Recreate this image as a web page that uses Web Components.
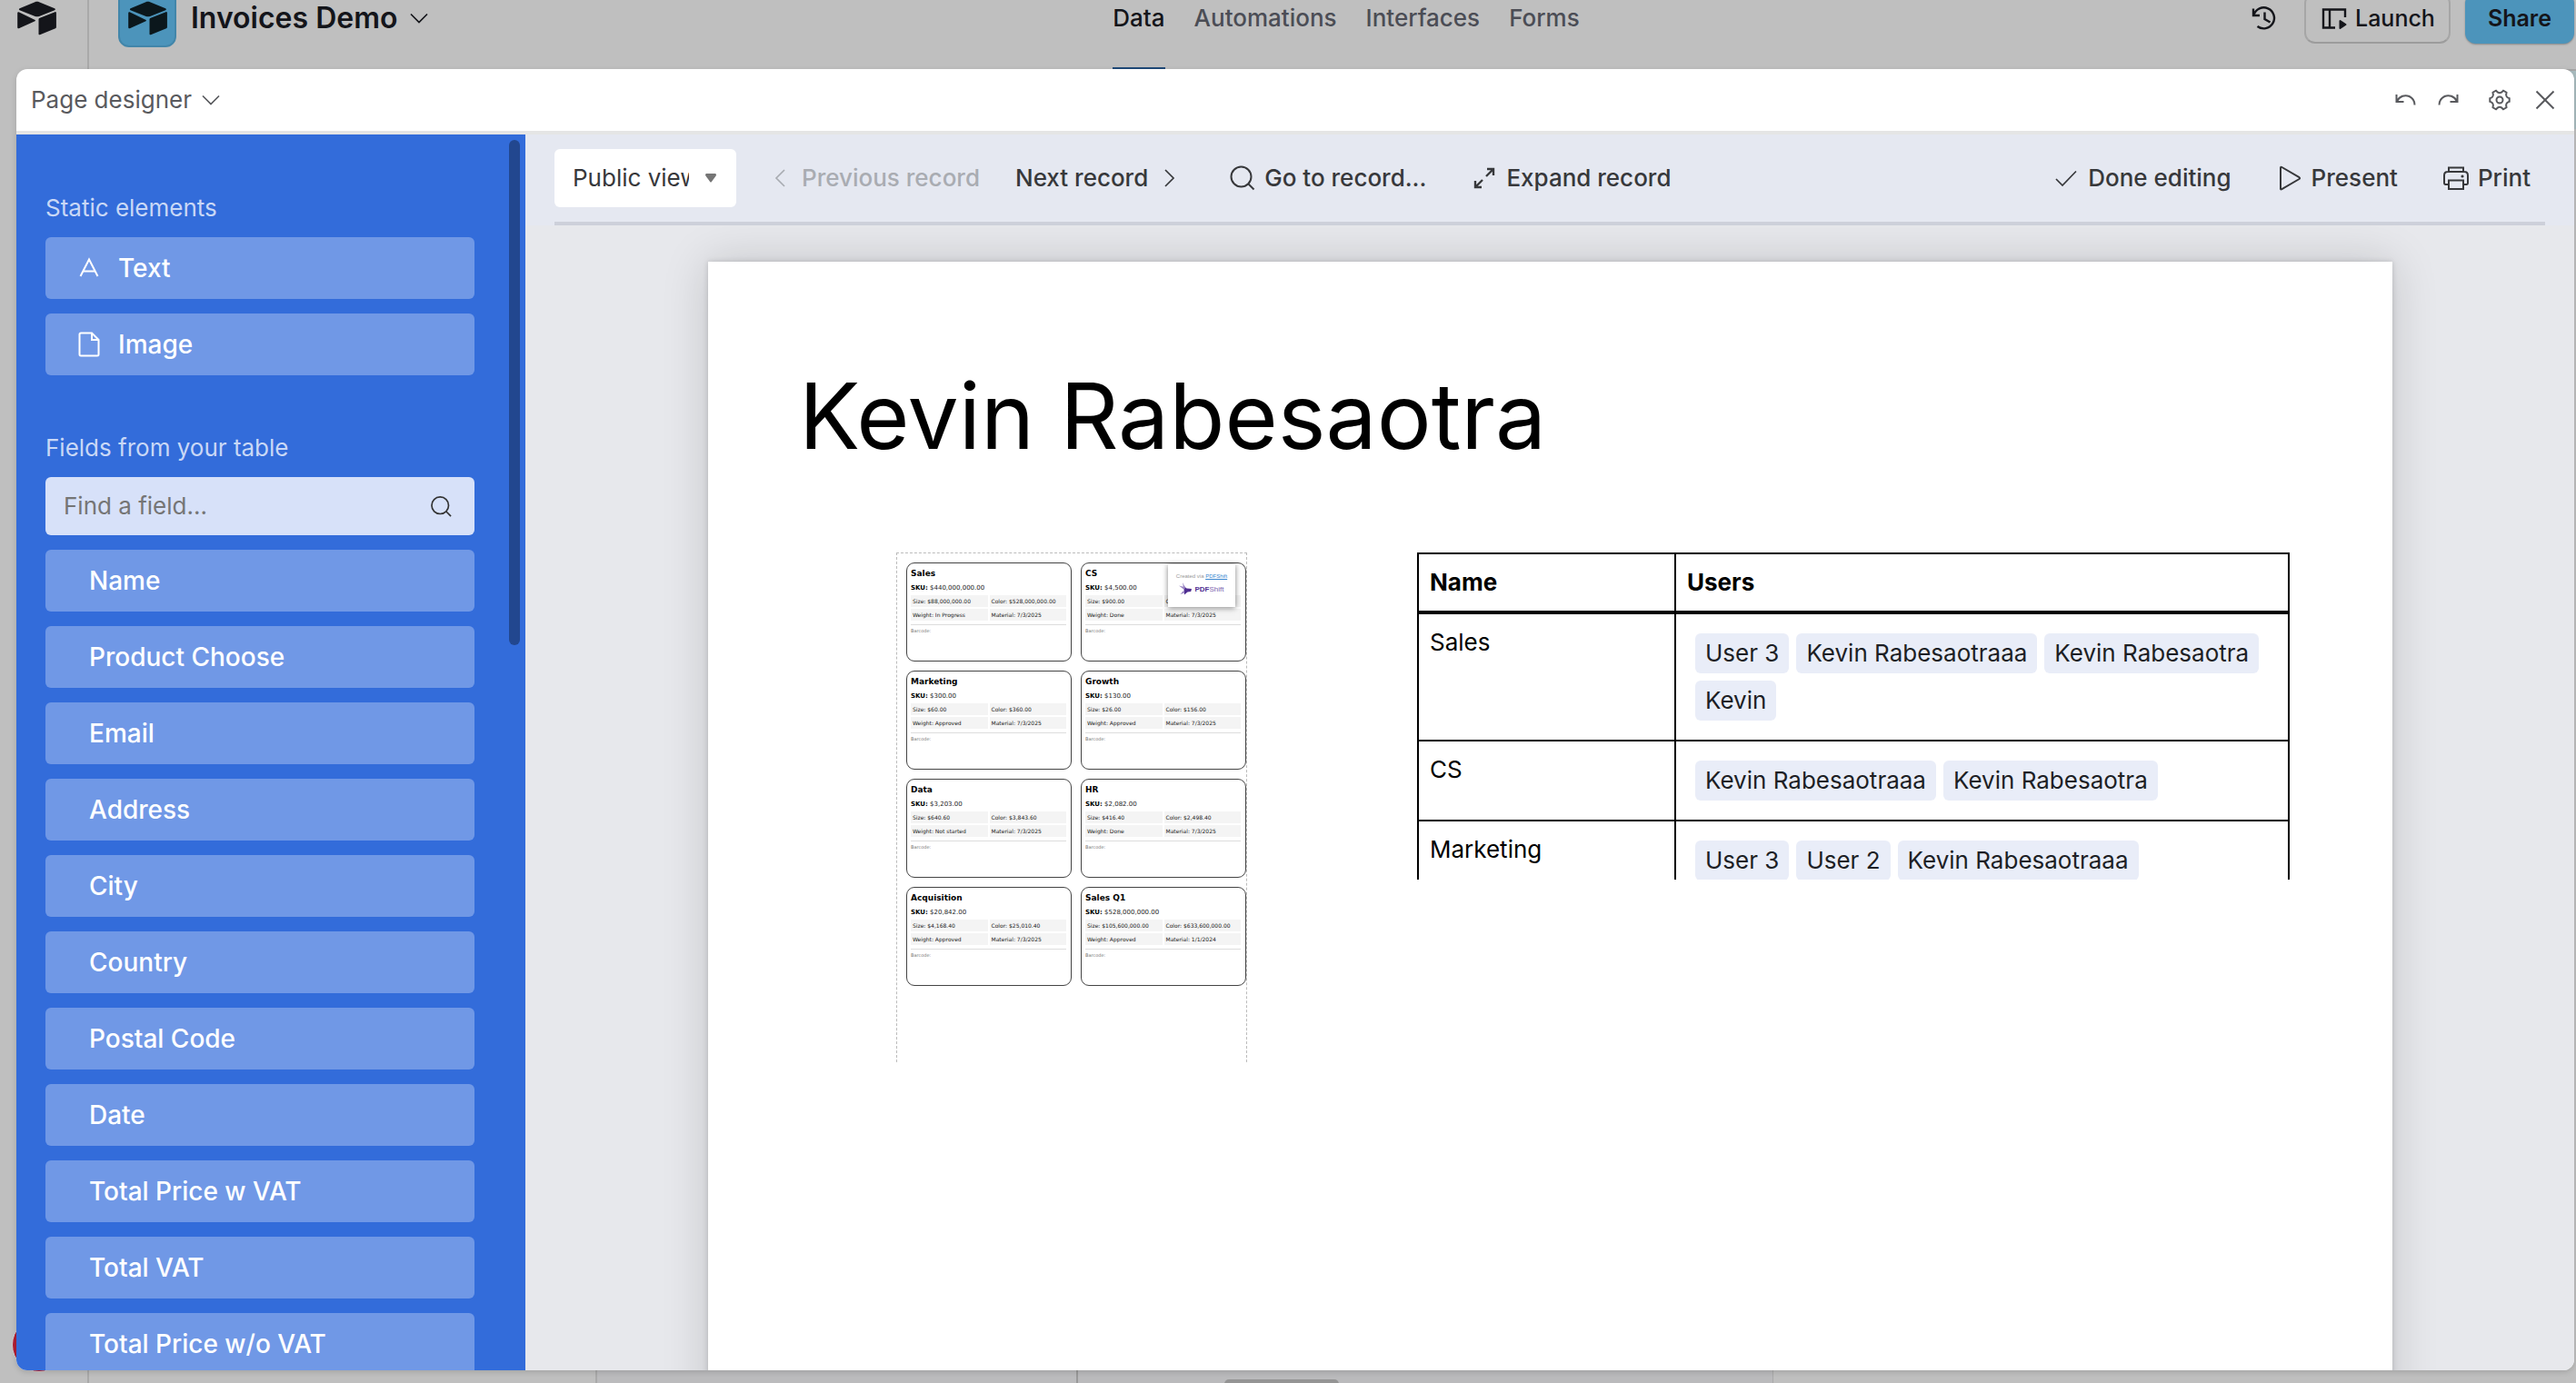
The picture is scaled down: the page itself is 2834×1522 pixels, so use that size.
<!DOCTYPE html>
<html lang="en">
<head>
  <meta charset="UTF-8">
  <meta name="viewport" content="width=device-width, initial-scale=1.0">
  <title>Invoices Demo - Page designer</title>
  <style>
    body {
      margin: 0;
      height: 100vh;
      overflow: hidden;
      font-family: Inter, "Liberation Sans", sans-serif;
      font-size: 26px;
      line-height: 32px;
      background: #bfbfbf;
    }
  </style>
</head>
<body>
  <base-workspace></base-workspace>

  <designer-dialog heading="Page designer">
    <element-sidebar slot="sidebar"></element-sidebar>
    <record-toolbar slot="toolbar"></record-toolbar>
    <design-page slot="canvas" heading="Kevin Rabesaotra">
      <card-sheet slot="left"></card-sheet>
      <users-table slot="right"></users-table>
    </design-page>
  </designer-dialog>

  <script>
    // line icons, all on a 32 x 32 grid
    const ICONS = {
      chevronDown: '<path stroke-width="1.700" d="M7 11.500l9 9 9-9"/>',
      chevronLeft: '<path stroke-width="1.700" d="M21 7l-9 9 9 9"/>',
      chevronRight: '<path stroke-width="1.700" d="M11 7l9 9-9 9"/>',
      search: '<circle cx="14.500" cy="14.500" r="11"/><path d="M22.500 22.500l6 6"/>',
      expand: '<path stroke-width="2.400" d="M18 14l8-8M19 6h7v7M14 18l-8 8M6 19v7h7"/>',
      check: '<path stroke-width="1.700" d="M5 17l7 7L27 8.500"/>',
      play: '<path d="M6 5v22.500q0 1.500 1.400.7L26.500 17q1.300-.9 0-1.800L7.400 4q-1.400-.8-1.400 1z"/>',
      print: '<path d="M8 9V4.500h16V9M8 23H4.500Q3 23 3 21V13q0-4 4-4h18q4 0 4 4v8q0 2-1.500 2H24"/><path d="M8 18.500h16V28H8z"/><circle cx="23" cy="14" r="1.600" fill="currentColor" stroke="none"/>',
      undo: '<path d="M6.500 10v8h8M7 17.500C10 11.500 16 10 20.500 12c4 2 6 5.500 6 9.500"/>',
      redo: '<path d="M25.500 10v8h-8M25 17.500C22 11.500 16 10 11.500 12c-4 2-6 5.500-6 9.500"/>',
      gear: '<circle cx="16" cy="16" r="3.500"/><path d="M12 5.700l2 1.900q2 1.100 4 0l2-1.900 3.500 2-.4 2.800q.2 2.200 2.200 3.100l1.400.5v3.800l-1.400.5q-2 .9-2.200 3.100l.4 2.800-3.500 2-2-1.900q-2-1.100-4 0l-2 1.900-3.500-2 .4-2.800q-.2-2.200-2.200-3.100l-1.400-.5v-3.800l1.400-.5q2-.9 2.200-3.100l-.4-2.800z"/>',
      close: '<path d="M6.500 6.500l19 19M25.500 6.500l-19 19"/>',
      textA: '<path d="M6.500 25L16 6.500 25.500 25M9.500 19.500h13"/>',
      file: '<path d="M19 3.500H7q-1.500 0-1.500 1.500v22q0 1.500 1.500 1.500h18q1.500 0 1.500-1.500V11zM19 3.500V11h7.500"/>',
      history: '<path stroke-width="2.400" d="M4 5.500v7.500h7M4.500 12.500a11.500 11.500 0 1 1 4 12.500M16.500 9.500v7.500l6 3.500"/>',
      launch: '<path stroke-width="2.400" d="M17 26.500H4v-20h24V15M11 6.500v20"/><path fill="currentColor" stroke-linejoin="round" d="M22.500 19v8l6-4z"/>'
    };

    const LOGO = `<svg width="44" height="38" viewBox="0 0 44 38" fill="currentColor" aria-hidden="true">
      <path d="M20.500 1.200L3.600 8.200c-1 .4-1 1.600 0 2l17 6.700c1.500.6 3 .6 4.500 0l17-6.700c1-.4 1-1.600 0-2L25 1.200c-1.500-.6-3-.6-4.500 0z"/>
      <path d="M24.500 20.300v16c0 .8.700 1.200 1.400.9L43 30.300c.5-.2.900-.6.900-1.200V13.200c0-.8-.8-1.300-1.500-1L25.200 19c-.4.200-.7.700-.7 1.300z"/>
      <path d="M20.600 21.100L2.600 12.300c-.7-.3-1.400.1-1.400.9v15.900c0 1 .9 1.500 1.600 1.100l17.700-8c.6-.3.600-.8.100-1.100z"/>
    </svg>`;

    class BaseElement extends HTMLElement {
      connectedCallback() {
        if (this.shadowRoot) return;
        this.attachShadow({ mode: 'open' });
        this.shadowRoot.innerHTML = `<style>
          *, *::before { box-sizing: border-box; }
          button, input, select { font: inherit; color: inherit; border: 0; background: none; margin: 0; padding: 0; }
          ${this.css()}
        </style>${this.html()}`;
      }
    }

    class UiIcon extends BaseElement {
      css() {
        return `
          :host { display: block; flex: none; width: var(--icon-size, 32px); height: var(--icon-size, 32px); }
          svg { display: block; width: 100%; height: 100%; }`;
      }
      html() {
        return `<svg viewBox="0 0 32 32" fill="none" stroke="currentColor" stroke-width="2" aria-hidden="true">${ICONS[this.getAttribute('name')]}</svg>`;
      }
    }

    // the base behind the dialog, already dimmed
    class BaseWorkspace extends BaseElement {
      css() {
        return `
          :host { display: flex; height: 100%; color: #14151a; }
          .rail { flex: none; width: 98px; padding: 1px 0 0 18px; border-right: 2px solid #a9a9a9; display: flex; flex-direction: column; justify-content: space-between; }
          .avatar { width: 60px; height: 60px; margin: 0 0 12px -5px; border-radius: 50%; background: #b01e33; border: 1px solid #d0cfd0; }
          .main { flex: 1; min-width: 0; display: flex; flex-direction: column; }
          header { flex: none; display: grid; grid-template-columns: 1fr auto 1fr; align-items: center; height: 112px; margin-top: -36px; padding: 0 2px 0 32px; }
          .base, nav, .actions, .actions button { display: flex; align-items: center; }
          .tile { width: 64px; height: 64px; border-radius: 12px; border: 2px solid #4286aa; background: #4c94bb; color: #0b171c; display: grid; place-items: center; }
          h1 { margin: 0 8px 0 16px; font-size: 32px; line-height: 40px; font-weight: 600; }
          nav { gap: 32px; height: 100%; font-weight: 500; }
          nav a { display: flex; align-items: center; height: 100%; color: #4b4d55; text-decoration: none; border-bottom: 2px solid transparent; border-top: 2px solid transparent; }
          nav a[aria-current] { color: #14151a; border-bottom-color: #1f4a78; }
          .actions { justify-content: flex-end; gap: 16px; font-size: 25px; }
          .history { margin-right: 12px; }
          .launch, .share { height: 56px; border-radius: 12px; }
          .launch { gap: 7px; padding: 0 15px; font-weight: 500; border: 2px solid #a6a6a6; border-bottom-color: #9c9c9c; }
          .share { padding: 0 25px; font-weight: 600; background: #4c94bb; box-shadow: 0 1px 2px rgba(0, 0, 0, .3); }
          .tabs { flex: none; height: 66px; border-top: 2px solid #a5a5a5; background: #a9bcbf; }
          .grid { flex: 1; display: flex; position: relative; }
          .views { width: 559px; border-right: 2px solid #a9a9a9; }
          .names { width: 529px; background: #bbbbbd; border-right: 2px solid #999; }
          .cells { width: 765px; background: #bababc; border-right: 1px solid #a9a9a9; }
          .bar { position: absolute; left: 1249px; bottom: -6px; width: 126px; height: 10px; border-radius: 5px; background: #949494; }`;
      }
      html() {
        return `
          <div class="rail">${LOGO}<div class="avatar"></div></div>
          <div class="main">
            <header>
              <div class="base"><div class="tile">${LOGO}</div><h1>Invoices Demo</h1><ui-icon name="chevronDown"></ui-icon></div>
              <nav>
                <a href="#data" aria-current="page">Data</a><a href="#automations">Automations</a><a href="#interfaces">Interfaces</a><a href="#forms">Forms</a>
              </nav>
              <div class="actions">
                <button class="history" aria-label="History"><ui-icon name="history"></ui-icon></button>
                <button class="launch"><ui-icon name="launch"></ui-icon>Launch</button>
                <button class="share">Share</button>
              </div>
            </header>
            <div class="tabs"></div>
            <div class="grid"><div class="views"></div><div class="names"></div><div class="cells"></div><div class="bar"></div></div>
          </div>`;
      }
    }

    class DesignerDialog extends BaseElement {
      css() {
        return `
          :host { position: absolute; inset: 76px 2px 14px 18px; display: flex; flex-direction: column; overflow: hidden; border-radius: 12px; background: #fff; box-shadow: 0 2px 6px rgba(0, 0, 0, .15); }
          header { flex: none; display: flex; align-items: center; height: 72px; padding: 0 16px; color: #595a5e; border-bottom: 4px solid #e5e5e5; }
          h2 { margin: 0 5px 0 0; font-size: 26px; font-weight: 400; }
          .tools { margin-left: auto; display: flex; gap: 16px; }
          .tools button { display: block; }
          .settings { margin: 0 2px 0 8px; }
          .content { flex: 1; min-height: 0; display: flex; }
          .stage { flex: 1; min-width: 0; display: flex; flex-direction: column; background: #e7e8ec; }
          .scroll { flex: 1; min-height: 0; overflow: hidden; padding: 40px 200px 0 201px; }`;
      }
      html() {
        return `
          <header>
            <h2>${this.getAttribute('heading')}</h2><ui-icon name="chevronDown"></ui-icon>
            <div class="tools">
              <button aria-label="Undo"><ui-icon name="undo"></ui-icon></button>
              <button aria-label="Redo"><ui-icon name="redo"></ui-icon></button>
              <button class="settings" aria-label="Settings"><ui-icon name="gear"></ui-icon></button>
              <button aria-label="Close"><ui-icon name="close"></ui-icon></button>
            </div>
          </header>
          <div class="content">
            <slot name="sidebar"></slot>
            <div class="stage">
              <slot name="toolbar"></slot>
              <div class="scroll"><slot name="canvas"></slot></div>
            </div>
          </div>`;
      }
    }

    class ElementSidebar extends BaseElement {
      css() {
        return `
          :host { position: relative; flex: none; box-sizing: border-box; width: 560px; padding: 65px 56px 0 32px; overflow: hidden; color: #fff; background: #336cda; }
          h3 { margin: 0 0 16px; font-size: 26px; font-weight: 400; color: #c9d8f6; }
          .list { display: flex; flex-direction: column; gap: 16px; }
          .static { margin-bottom: 64px; }
          .item { display: flex; align-items: center; gap: 16px; height: 68px; padding: 0 48px; border-radius: 6px; font-size: 28px; font-weight: 500; text-align: left; background: #7098e6; }
          .static .item { padding-left: 32px; }
          .search { display: flex; align-items: center; height: 64px; padding: 0 23px 0 20px; border-radius: 6px; color: #333; background: #d7e1f9; --icon-size: 27px; }
          .search input { flex: 1; min-width: 0; outline: 0; }
          .search input::placeholder { color: #757575; opacity: 1; }
          .thumb { position: absolute; top: 6px; right: 6px; width: 12px; height: 556px; border-radius: 6px; background: #22478f; }`;
      }
      html() {
        const fields = ['Name', 'Product Choose', 'Email', 'Address', 'City', 'Country', 'Postal Code', 'Date',
          'Total Price w VAT', 'Total VAT', 'Total Price w/o VAT'];
        return `
          <h3>Static elements</h3>
          <div class="list static">
            <button class="item"><ui-icon name="textA"></ui-icon>Text</button>
            <button class="item"><ui-icon name="file"></ui-icon>Image</button>
          </div>
          <h3>Fields from your table</h3>
          <div class="list">
            <label class="search"><input type="text" placeholder="Find a field..." aria-label="Find a field"><ui-icon name="search"></ui-icon></label>
            ${fields.map(f => `<button class="item">${f}</button>`).join('')}
          </div>
          <div class="thumb"></div>`;
      }
    }

    class RecordToolbar extends BaseElement {
      css() {
        return `
          :host { display: block; flex: none; padding: 0 32px; color: #37383b; font-weight: 500; background: #e5e8f1; }
          .row { display: flex; align-items: center; gap: 48px; height: 100px; padding-right: 16px; border-bottom: 4px solid #cdd0da; }
          .row > button { display: flex; align-items: center; gap: 8px; white-space: nowrap; }
          .view { position: relative; width: 200px; margin-right: -16px; font-weight: 400; }
          .view select { width: 100%; height: 64px; padding: 0 52px 0 20px; border-radius: 6px; appearance: none; background: #fff; }
          .view svg { position: absolute; right: 22px; top: 27px; pointer-events: none; }
          button:disabled { color: #a9acb2; }
          .next { margin-left: -9px; }
          .done { margin-left: auto; }`;
      }
      html() {
        return `
          <div class="row">
            <div class="view">
              <select aria-label="View"><option>Public view</option></select>
              <svg width="12" height="10" viewBox="0 0 12 10" fill="#757575" aria-hidden="true"><path d="M1 0h10q1 0 1 2L6.500 9.500h-1L0 2q0-2 1-2z"/></svg>
            </div>
            <button disabled><ui-icon name="chevronLeft"></ui-icon>Previous record</button>
            <button class="next">Next record<ui-icon name="chevronRight"></ui-icon></button>
            <button><ui-icon name="search"></ui-icon>Go to record...</button>
            <button><ui-icon name="expand"></ui-icon>Expand record</button>
            <button class="done"><ui-icon name="check"></ui-icon>Done editing</button>
            <button><ui-icon name="play"></ui-icon>Present</button>
            <button><ui-icon name="print"></ui-icon>Print</button>
          </div>`;
      }
    }

    class DesignPage extends BaseElement {
      css() {
        return `
          :host { display: block; box-sizing: border-box; aspect-ratio: 11 / 8.5; padding: 110px 113px 0 100px; color: #000; background: #fff; box-shadow: 0 0 48px rgba(0, 0, 0, .16), 0 0 6px rgba(0, 0, 0, .16); }
          h2 { margin: 0 0 90px; font-size: 100px; line-height: 120px; font-weight: 400; }
          .row { display: grid; grid-template-columns: 386px 1fr; gap: 187px; align-items: start; padding-left: 107px; }`;
      }
      html() {
        return `<h2>${this.getAttribute('heading')}</h2><div class="row"><slot name="left"></slot><slot name="right"></slot></div>`;
      }
    }

    class CardSheet extends BaseElement {
      css() {
        return `
          :host { position: relative; display: grid; box-sizing: border-box; grid-template-columns: 1fr 1fr; align-content: start; gap: 10px; min-height: 561px; padding: 10px 0 0 10px; border: 1px dashed #bbb; border-bottom: 0; font-family: "DejaVu Sans", sans-serif; color: #222; }
          .card { height: 109px; padding: 5px 5px 0 4px; border: 1px solid #444; border-radius: 9px; background: #fff; }
          h4 { margin: 0; font-size: 9px; line-height: 13px; color: #000; }
          p { margin: 2px 0 1px; font-size: 7px; line-height: 14px; }
          p b { color: #000; }
          dl { margin: 0 0 4px; display: grid; grid-template-columns: 1fr 1fr; gap: 2px; font-size: 6px; line-height: 13px; }
          dl div { padding: 0 2px; background: #f4f4f4; white-space: nowrap; }
          dt, dd { display: inline; margin: 0; }
          .code { padding-top: 2px; font-size: 5px; line-height: 9px; color: #777; border-top: 1px solid #ddd; }
          .stamp { position: absolute; top: 12px; right: 12px; width: 74px; height: 47px; padding-top: 8px; text-align: center; font-family: "Liberation Sans", sans-serif; font-size: 6px; line-height: 10px; color: #999; background: #fff; box-shadow: 0 1px 6px rgba(0, 0, 0, .5); white-space: nowrap; }
          .stamp a { color: #3a86cf; }
          .brand { display: flex; justify-content: center; align-items: center; gap: 2px; margin-top: 2px; font-size: 8px; line-height: 16px; color: #7a5fae; }
          .brand b { color: #4f2d91; }`;
      }
      html() {
        const cards = [
          ['Sales', '$440,000,000.00', '$88,000,000.00', '$528,000,000.00', 'In Progress', '7/3/2025'],
          ['CS', '$4,500.00', '$900.00', '$5,400.00', 'Done', '7/3/2025'],
          ['Marketing', '$300.00', '$60.00', '$360.00', 'Approved', '7/3/2025'],
          ['Growth', '$130.00', '$26.00', '$156.00', 'Approved', '7/3/2025'],
          ['Data', '$3,203.00', '$640.60', '$3,843.60', 'Not started', '7/3/2025'],
          ['HR', '$2,082.00', '$416.40', '$2,498.40', 'Done', '7/3/2025'],
          ['Acquisition', '$20,842.00', '$4,168.40', '$25,010.40', 'Approved', '7/3/2025'],
          ['Sales Q1', '$528,000,000.00', '$105,600,000.00', '$633,600,000.00', 'Approved', '1/1/2024']
        ];
        return cards.map(([name, sku, size, color, weight, material]) => `
          <div class="card">
            <h4>${name}</h4>
            <p><b>SKU:</b> ${sku}</p>
            <dl>
              <div><dt>Size:</dt> <dd>${size}</dd></div>
              <div><dt>Color:</dt> <dd>${color}</dd></div>
              <div><dt>Weight:</dt> <dd>${weight}</dd></div>
              <div><dt>Material:</dt> <dd>${material}</dd></div>
            </dl>
            <div class="code">Barcode:</div>
          </div>`).join('') + `
          <div class="stamp">
            Created via <a href="#pdfshift">PDFShift</a>
            <div class="brand">
              <svg width="15" height="16" viewBox="0 0 15 16" aria-hidden="true">
                <path fill="#4f2d91" d="M5.500 4l3 2.500 5.500.5-.8 3-3.700.5L6 13.500z"/>
                <path fill="#9a86c4" d="M4 0l3 5.500L5.500 9zM0 3.500l5 1.200.5 3zM1.500 13l4-4.500.5 3z"/>
              </svg>
              <span><b>PDF</b>Shift</span>
            </div>
          </div>`;
      }
    }

    class UsersTable extends BaseElement {
      css() {
        return `
          :host { display: block; max-height: 360px; overflow: hidden; }
          table { width: 100%; border: 2px solid #000; border-bottom: 0; border-spacing: 0; table-layout: fixed; }
          th, td { padding: 15px 12px; text-align: left; vertical-align: top; font-size: 26px; line-height: 32px; }
          th { font-weight: 700; border-bottom: 4px solid #000; }
          td { border-bottom: 2px solid #000; }
          th:first-child, td:first-child { width: 283px; border-right: 2px solid #000; }
          td.users { padding: 21px; }
          .chips { display: flex; flex-wrap: wrap; gap: 8px; }
          .chip { padding: 6px 11px; border-radius: 6px; color: #1d1f25; background: #e9edf8; }`;
      }
      html() {
        const rows = [
          ['Sales', ['User 3', 'Kevin Rabesaotraaa', 'Kevin Rabesaotra', 'Kevin']],
          ['CS', ['Kevin Rabesaotraaa', 'Kevin Rabesaotra']],
          ['Marketing', ['User 3', 'User 2', 'Kevin Rabesaotraaa']]
        ];
        return `
          <table>
            <thead><tr><th>Name</th><th>Users</th></tr></thead>
            <tbody>${rows.map(([name, users]) => `
              <tr><td>${name}</td><td class="users"><div class="chips">${users.map(u => `<span class="chip">${u}</span>`).join('')}</div></td></tr>`).join('')}
            </tbody>
          </table>`;
      }
    }

    customElements.define('ui-icon', UiIcon);
    customElements.define('base-workspace', BaseWorkspace);
    customElements.define('designer-dialog', DesignerDialog);
    customElements.define('element-sidebar', ElementSidebar);
    customElements.define('record-toolbar', RecordToolbar);
    customElements.define('design-page', DesignPage);
    customElements.define('card-sheet', CardSheet);
    customElements.define('users-table', UsersTable);
  </script>
</body>
</html>
